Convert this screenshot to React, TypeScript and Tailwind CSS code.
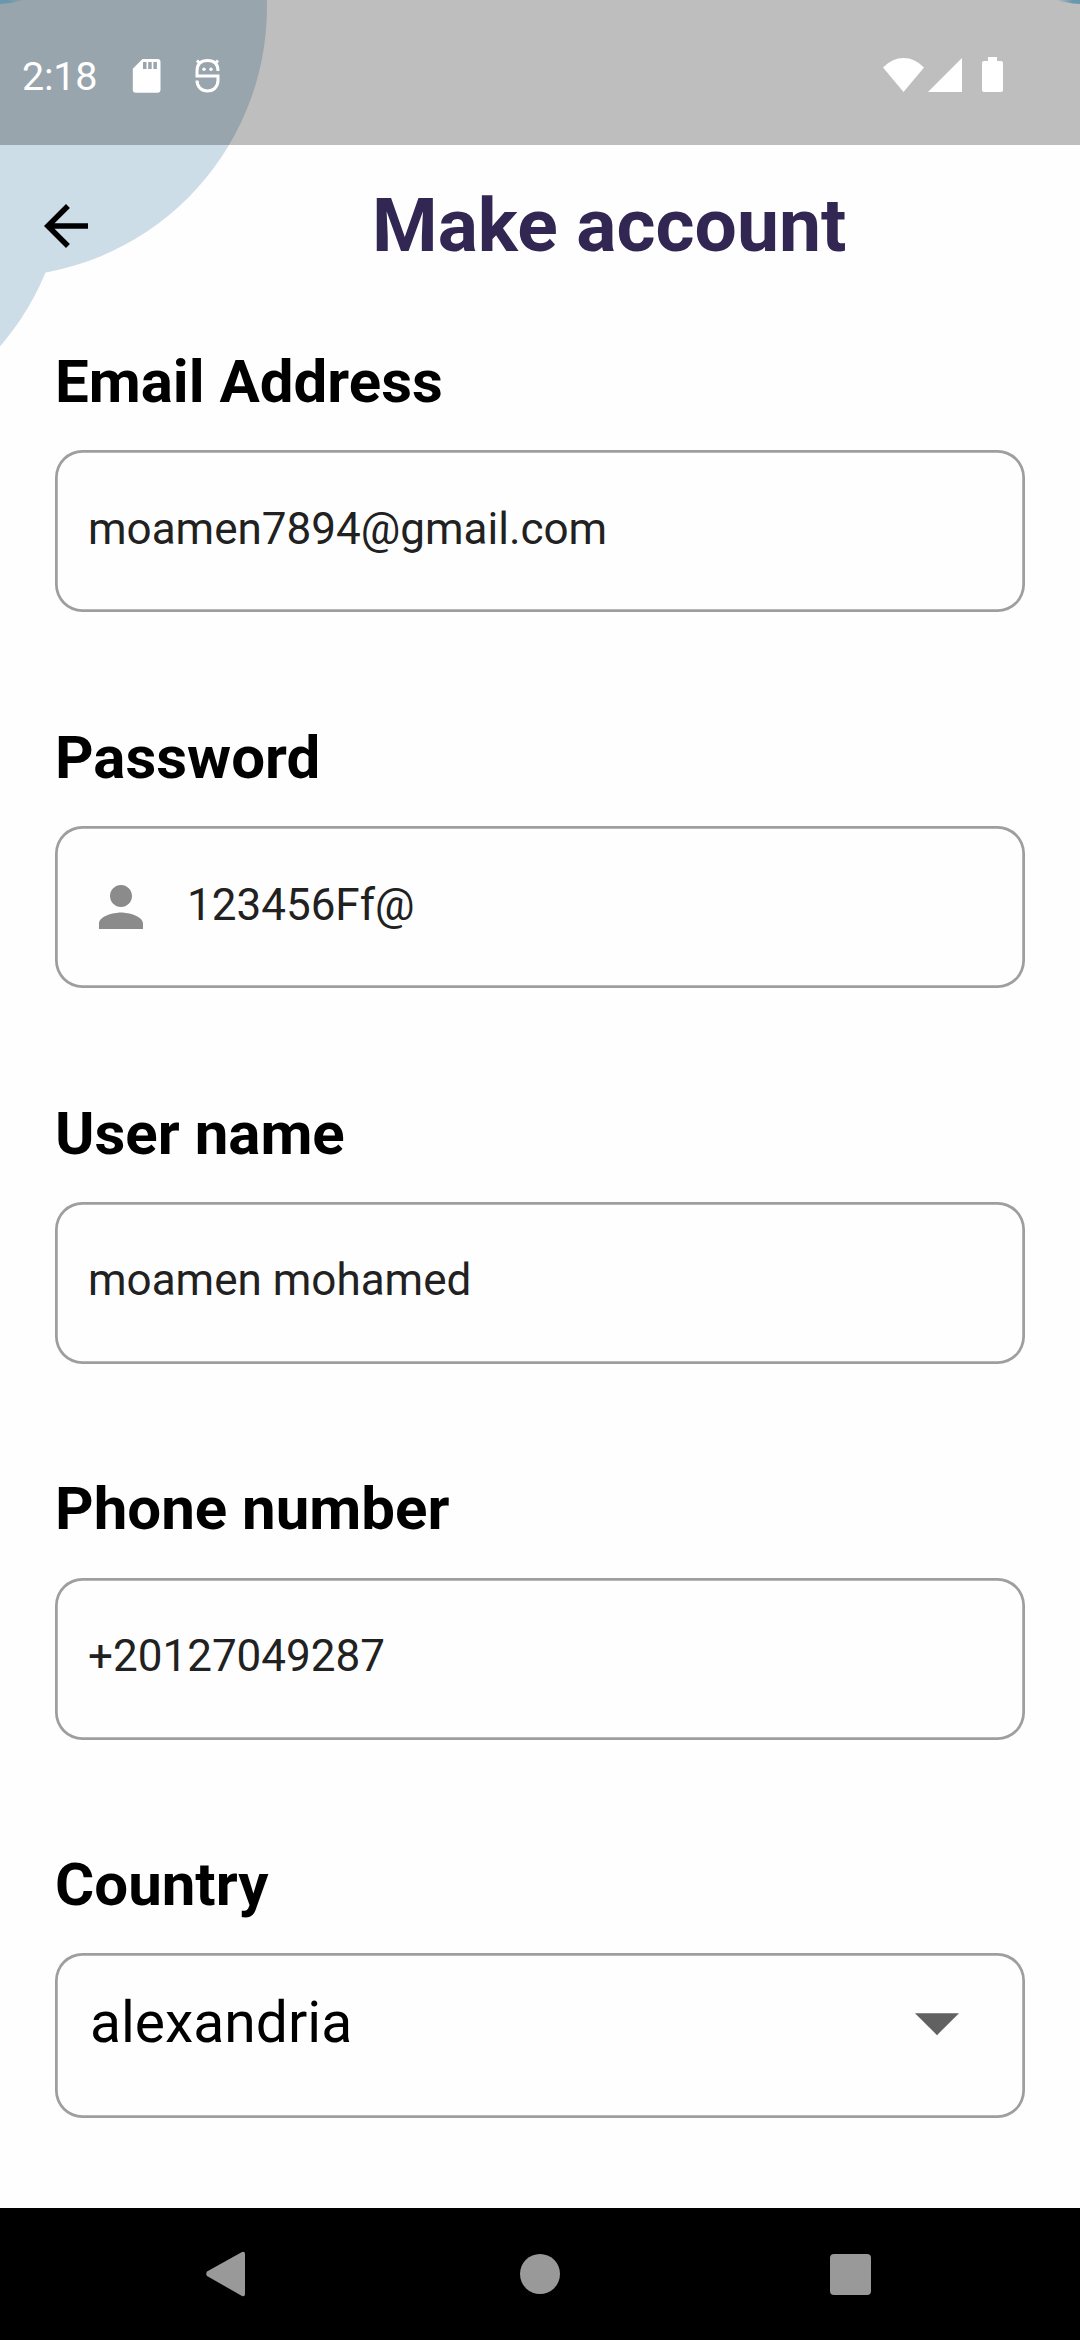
import React from "react";

function StatusBar() {
  return (
    <header className="relative z-10 flex h-[145px] items-center justify-between bg-black/25 text-white">
      <div className="flex items-center pt-[6px]">
        <span className="ml-[22px] mt-[3px] w-[110px] text-[39.500px] leading-[46px] tracking-[-0.2px]">2:18</span>
        <svg className="h-[36px] w-[30px]" viewBox="0 0 30 36" fill="currentColor">
          <path
            fillRule="evenodd"
            d="M10.5 1H25.500a3 3 0 0 1 3 3V31.700a3 3 0 0 1-3 3H3.800A3 3 0 0 1 .8 31.700V10.800ZM11 4v7h3.500V4Zm5.200 0v7h3.500V4Zm5.200 0v7h3.500V4Z"
          />
        </svg>
        <svg className="ml-[32px] h-[36px] w-[28px]" viewBox="0 0 28 36" fill="none" stroke="currentColor" strokeWidth="3">
          <path d="M24 13C24 6 20 2.500 13.500 2.500S3 6 3 13V18H24V22C24 29 19.500 33 13.500 33S3 29 3 22.500" />
          <path d="M6 5.500 3 2.500M21 5.500 24 2.500" />
          <circle cx="10" cy="11.200" r="1.700" fill="currentColor" stroke="none" />
          <circle cx="17" cy="11.200" r="1.700" fill="currentColor" stroke="none" />
        </svg>
      </div>
      <div className="mr-[77px] flex items-end pt-[5px]">
        <svg className="h-[36px] w-[41px]" viewBox="0 0 41 36" fill="currentColor">
          <path d="M0 10.500Q9 1 20.500 1T41 10.500L20.500 35Z" />
        </svg>
        <svg className="ml-[4px] h-[36px] w-[34px]" viewBox="0 0 34 36" fill="currentColor">
          <path d="M34 1V35H0Z" />
        </svg>
        <svg className="ml-[20px] h-[36px] w-[21px]" viewBox="0 0 21 36" fill="currentColor">
          <path d="M6 0H15V4H19A2 2 0 0 1 21 6V33A2 2 0 0 1 19 35H2A2 2 0 0 1 0 33V6A2 2 0 0 1 2 4H6Z" />
        </svg>
      </div>
    </header>
  );
}

function Backdrop() {
  return (
    <svg className="absolute left-0 top-0 h-[400px] w-[1080px]" viewBox="0 0 1080 400">
      <defs>
        <linearGradient id="cornerLeft">
          <stop offset="0.3" stopColor="#8ccae8" />
          <stop offset="1" stopColor="#8ccae8" stopOpacity="0" />
        </linearGradient>
        <linearGradient id="cornerRight">
          <stop offset="0" stopColor="#8ccae8" stopOpacity="0" />
          <stop offset="0.7" stopColor="#8ccae8" />
        </linearGradient>
      </defs>
      <g fill="#cddde7">
        <circle cx="-3" cy="7" r="270" />
        <circle cx="-204" cy="169.500" r="270" />
      </g>
      <path d="M0 0H26Q14 3 0 4Z" fill="url(#cornerLeft)" />
      <path d="M1056 0H1080V4Q1066 3 1056 0Z" fill="url(#cornerRight)" />
    </svg>
  );
}

function Label({ children }: { children: React.ReactNode }) {
  return <h2 className="text-[60px] font-bold leading-[70px] text-black">{children}</h2>;
}

function Box({ className, children }: { className: string; children: React.ReactNode }) {
  return (
    <div className={`flex w-[970px] rounded-[27.5px] shadow-[inset_0_0_0_2.75px_#9e9e9e] ${className}`}>
      {children}
    </div>
  );
}

function Field({ label, value, icon }: { label: string; value: string; icon?: React.ReactNode }) {
  return (
    <section className="h-[375.700px]">
      <Label>{label}</Label>
      <Box className="mt-[33.300px] h-[162px] items-center pl-[33px]">
        {icon}
        <span className="-mt-[5px] text-[44px] leading-[52px] text-[#212121]">{value}</span>
      </Box>
    </section>
  );
}

function PersonIcon() {
  return (
    <svg className="mr-[33px] h-[66px] w-[66px]" viewBox="0 0 24 24" fill="#8b8b8b">
      <path d="M12 12c2.210 0 4-1.790 4-4s-1.790-4-4-4-4 1.790-4 4 1.790 4 4 4zm0 2c-2.670 0-8 1.340-8 4v2h16v-2c0-2.660-5.330-4-8-4z" />
    </svg>
  );
}

function NavBar() {
  return (
    <nav className="flex h-[132px] items-center bg-black text-[#999999]">
      <svg className="ml-[206px] h-[46px] w-[40px]" viewBox="0 0 40 46" fill="currentColor">
        <path d="M1 20.500 36 1Q39 0 39 3V43Q39 46 36 45L1 25Q-0.500 23 1 20.500Z" />
      </svg>
      <div className="ml-[274px] h-[40px] w-[40px] rounded-full bg-[#999999]" />
      <div className="ml-[270px] h-[41px] w-[41px] rounded-[4px] bg-[#999999]" />
    </nav>
  );
}

export default function App() {
  return (
    <div className="relative flex h-[2340px] w-[1080px] flex-col overflow-hidden bg-[#fefefe] font-['Roboto',sans-serif]">
      <Backdrop />
      <StatusBar />
      <div className="relative mb-[2px] flex h-[161px] items-center">
        <svg className="ml-[33px] h-[66px] w-[66px]" viewBox="0 0 24 24" fill="black">
          <path d="M20 11H7.830l5.590-5.590L12 4l-8 8 8 8 1.410-1.410L7.830 13H20v-2z" />
        </svg>
        <h1 className="-mt-px ml-[273px] text-[75px] font-bold leading-[88px] text-[#322653]">Make account</h1>
      </div>
      <main className="relative flex-1 pl-[55px] pt-[39.200px]">
        <Field label="Email Address" value="moamen7894@gmail.com" />
        <Field label="Password" value="123456Ff@" icon={<PersonIcon />} />
        <Field label="User name" value="moamen mohamed" />
        <Field label="Phone number" value="+20127049287" />
        <section>
          <Label>Country</Label>
          <Box className="mt-[33.300px] h-[165px] items-start justify-between pl-[35px] pr-[55px] pt-[36px]">
            <span className="text-[57px] leading-[68px] text-black">alexandria</span>
            <svg className="-mt-[2px] h-[66px] w-[66px]" viewBox="0 0 24 24" fill="#616161">
              <path d="M4 9.500h16l-8 8z" />
            </svg>
          </Box>
        </section>
      </main>
      <NavBar />
    </div>
  );
}
